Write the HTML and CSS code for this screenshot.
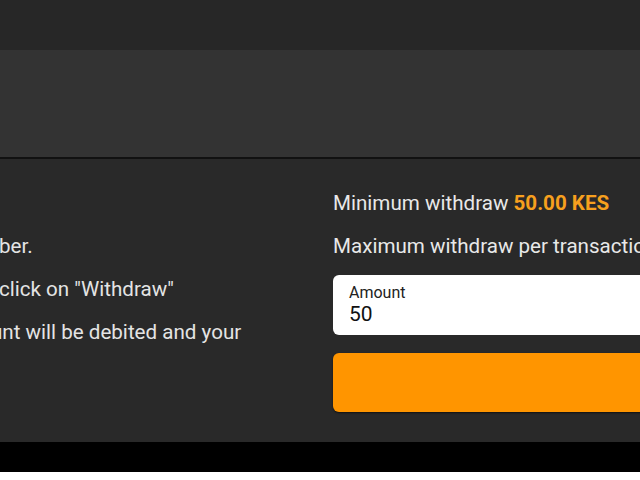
FILE: index.html
```html
<!DOCTYPE html>
<html lang="en">
<head>
<meta charset="utf-8">
<title>Withdraw</title>
<link rel="stylesheet" href="styles.css">
</head>
<body>
<div class="page">
  <header class="topbar"></header>
  <section class="banner"></section>
  <main class="content">
    <div class="steps">
      <p class="step">ber.</p>
      <p class="step">click on "Withdraw"</p>
      <p class="step step-shift">unt will be debited and your</p>
    </div>
    <div class="form">
      <p class="limit">Minimum withdraw <strong class="accent">50.00 KES</strong></p>
      <p class="limit">Maximum withdraw per transaction <strong class="accent">150,000.00 KES</strong></p>
      <label class="field">
        <span class="field-label">Amount</span>
        <span class="field-value">50</span>
      </label>
      <button class="submit" type="button"></button>
    </div>
  </main>
  <footer class="footer"></footer>
</div>
</body>
</html>
```
FILE: styles.css
```css
html, body {
  margin: 0;
  padding: 0;
  background: #ffffff;
}
body {
  width: 640px;
  height: 480px;
  overflow: hidden;
  font-family: Roboto, "Noto Sans", sans-serif;
}
.page {
  display: flex;
  flex-direction: column;
}
.topbar {
  height: 50px;
  background: #272727;
}
.banner {
  height: 107px;
  background: #333333;
  border-bottom: 2px solid #111111;
}
.content {
  height: 283px;
  background: #292929;
  display: grid;
  grid-template-columns: 333px 460px;
  overflow: hidden;
}
.steps {
  padding-top: 75px;
  margin-left: -1px;
  overflow: hidden;
}
.step {
  margin: 0 0 19px;
  font-size: 20.6px;
  line-height: 24px;
  color: #e4e4e4;
  white-space: nowrap;
}
.step-shift {
  text-indent: -8px;
}
.form {
  padding-top: 32px;
  display: flex;
  flex-direction: column;
}
.limit {
  margin: 0 0 19px;
  font-size: 20.6px;
  line-height: 24px;
  color: #e8e8e8;
  white-space: nowrap;
}
.limit:nth-child(2) {
  margin-bottom: 17px;
}
.accent {
  color: #f7a01e;
  font-weight: 700;
}
.field {
  height: 60px;
  box-sizing: border-box;
  background: #ffffff;
  border-radius: 6px;
  padding: 8px 16px 0;
  display: flex;
  flex-direction: column;
}
.field-label {
  font-size: 16px;
  line-height: 19px;
  color: #222222;
}
.field-value {
  font-size: 21px;
  line-height: 24px;
  color: #111111;
}
.submit {
  margin-top: 18px;
  height: 59px;
  border: none;
  border-radius: 6px;
  background: #ff9500;
  box-shadow: 0 1px 2px rgba(0, 0, 0, 0.6);
}
.footer {
  height: 30px;
  background: #000000;
}
```
